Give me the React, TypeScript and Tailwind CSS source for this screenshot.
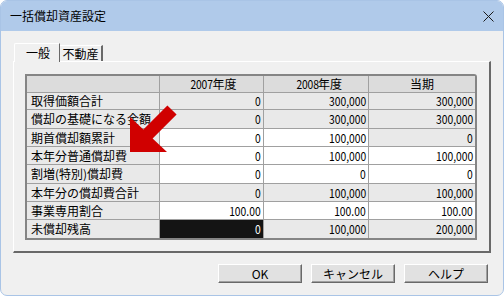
import React from "react";

type Cell = { v: string; c: "g" | "w" | "b" };
const G = "g", W = "w", B = "b";
const rows: { label: string; cells: Cell[]; h: string }[] = [
  { label: "取得価額合計", cells: [{ v: "0", c: G }, { v: "300,000", c: G }, { v: "300,000", c: G }], h: "h-[17px]" },
  { label: "償却の基礎になる金額", cells: [{ v: "0", c: G }, { v: "300,000", c: G }, { v: "300,000", c: G }], h: "h-[19px]" },
  { label: "期首償却額累計", cells: [{ v: "0", c: W }, { v: "100,000", c: W }, { v: "0", c: G }], h: "h-[18px]" },
  { label: "本年分普通償却費", cells: [{ v: "0", c: W }, { v: "100,000", c: W }, { v: "100,000", c: W }], h: "h-[18px]" },
  { label: "割増(特別)償却費", cells: [{ v: "0", c: W }, { v: "0", c: W }, { v: "0", c: W }], h: "h-[19px]" },
  { label: "本年分の償却費合計", cells: [{ v: "0", c: G }, { v: "100,000", c: G }, { v: "100,000", c: G }], h: "h-[18px]" },
  { label: "事業専用割合", cells: [{ v: "100.00", c: W }, { v: "100.00", c: W }, { v: "100.00", c: W }], h: "h-[18px]" },
  { label: "未償却残高", cells: [{ v: "0", c: B }, { v: "100,000", c: G }, { v: "200,000", c: G }], h: "h-[18px]" },
];

const widths = ["w-[133px]", "w-[104px]", "w-[105px]", "w-[106px]"];

function bgOf(c: string) {
  if (c === "g") return "bg-[#e9e9e9] text-black";
  if (c === "w") return "bg-white text-black";
  return "bg-[#141414] text-white";
}

function Btn({ children }: { children: React.ReactNode }) {
  return (
    <div className="w-[84px] h-[19px] bg-[#e1e1e1] border-t border-l border-t-white border-l-white border-b border-r border-b-[#696969] border-r-[#696969] shadow-[inset_-1px_-1px_0_#a0a0a0] flex items-center justify-center text-[12px] leading-none">
      {children}
    </div>
  );
}

function Head({ year, rest }: { year?: string; rest: string }) {
  return (
    <span className="inline-flex items-center">
      {year && <span className="inline-block w-[25px] scale-x-[0.86] text-right origin-right tracking-[-0.2px]">{year}</span>}
      <span>{rest}</span>
    </span>
  );
}

export default function App() {
  const font = { fontFamily: '"Noto Sans CJK JP", "Liberation Sans", sans-serif' };
  return (
    <div className="relative w-[504px] h-[296px] bg-white" style={font}>
      <div className="w-[504px] h-[296px] flex flex-col rounded-[7px] overflow-hidden border border-[#a9c4e6] bg-[#f0f0f0]">
        <div className="h-[30px] bg-[#b0caea] flex items-center justify-between pl-[9px] pr-[9px] shrink-0">
          <span className="text-[12px] text-black leading-none">一括償却資産設定</span>
          <svg width="11" height="11" viewBox="0 0 11 11">
            <path d="M0.5 0.5 L10.5 10.5 M10.5 0.5 L0.5 10.5" stroke="#1a1a1a" strokeWidth="1" />
          </svg>
        </div>
        <div className="flex-1 flex flex-col px-[12px]">
          <div className="flex items-end mt-[11px] pl-[1px] h-[19px]">
            <div className="relative z-10 w-[46px] h-[19px] -mb-[1px] bg-[#f0f0f0] border-t border-l border-t-white border-l-white border-r border-r-[#696969] rounded-tl-[2px] flex items-start justify-center pt-[2px] pl-[2px] text-[12px] leading-[14px]">
              一般
            </div>
            <div className="w-[43px] h-[16px] border-t border-t-white border-r-2 border-r-[#696969] flex items-start justify-center pt-[1px] text-[12px] leading-[14px]">
              不動産
            </div>
          </div>
          <div className="w-[478px] h-[192px] border-t border-l border-t-white border-l-white border-r-2 border-b-2 border-r-[#696969] border-b-[#696969] pt-[12px] pl-[11px]">
            <div className="w-[452px] h-[166px] border-2 border-[#858585] rounded-tr-[3px] bg-white flex flex-col overflow-hidden">
              <div className="flex h-[17px] shrink-0 bg-[#dcdcdc] border-b border-[#a0a0a0]">
                <div className={`${widths[0]} border-r border-[#a0a0a0]`} />
                <div className={`${widths[1]} border-r border-[#a0a0a0] flex items-center justify-center text-[12px] leading-none pl-[1px]`}>
                  <Head year="2007" rest="年度" />
                </div>
                <div className={`${widths[2]} border-r border-[#a0a0a0] flex items-center justify-center text-[12px] leading-none pl-[3px]`}>
                  <Head year="2008" rest="年度" />
                </div>
                <div className={`${widths[3]} flex items-center justify-center text-[12px] leading-none`}>
                  <Head rest="当期" />
                </div>
              </div>
              {rows.map((r, ri) => (
                <div key={ri} className={`flex shrink-0 ${r.h} ${ri < rows.length - 1 ? "border-b border-[#a0a0a0]" : ""}`}>
                  <div className={`${widths[0]} border-r border-[#a0a0a0] bg-[#e9e9e9] flex items-center pl-[4px] text-[12px] leading-none whitespace-nowrap`}>
                    {r.label}
                  </div>
                  {r.cells.map((c, ci) => (
                    <div key={ci} className={`${widths[ci + 1]} ${ci < 2 ? "border-r border-[#a0a0a0]" : ""} ${bgOf(c.c)} flex items-center justify-end pr-[2px] text-[12px] leading-none`}>
                      <span className="inline-block scale-x-[0.86] origin-right">{c.v}</span>
                    </div>
                  ))}
                </div>
              ))}
            </div>
          </div>
          <div className="flex justify-end gap-[9px] mt-[11px] pr-[3px]">
            <Btn>OK</Btn>
            <Btn>キャンセル</Btn>
            <Btn>ヘルプ</Btn>
          </div>
        </div>
      </div>
      <svg className="absolute left-0 top-0 pointer-events-none" width="504" height="296" viewBox="0 0 504 296">
        <polygon
          points="130,152 130,117 143.4,129.4 167.4,105.4 176.6,114.6 152.6,138.6 167,152"
          fill="#d00000"
        />
      </svg>
    </div>
  );
}
